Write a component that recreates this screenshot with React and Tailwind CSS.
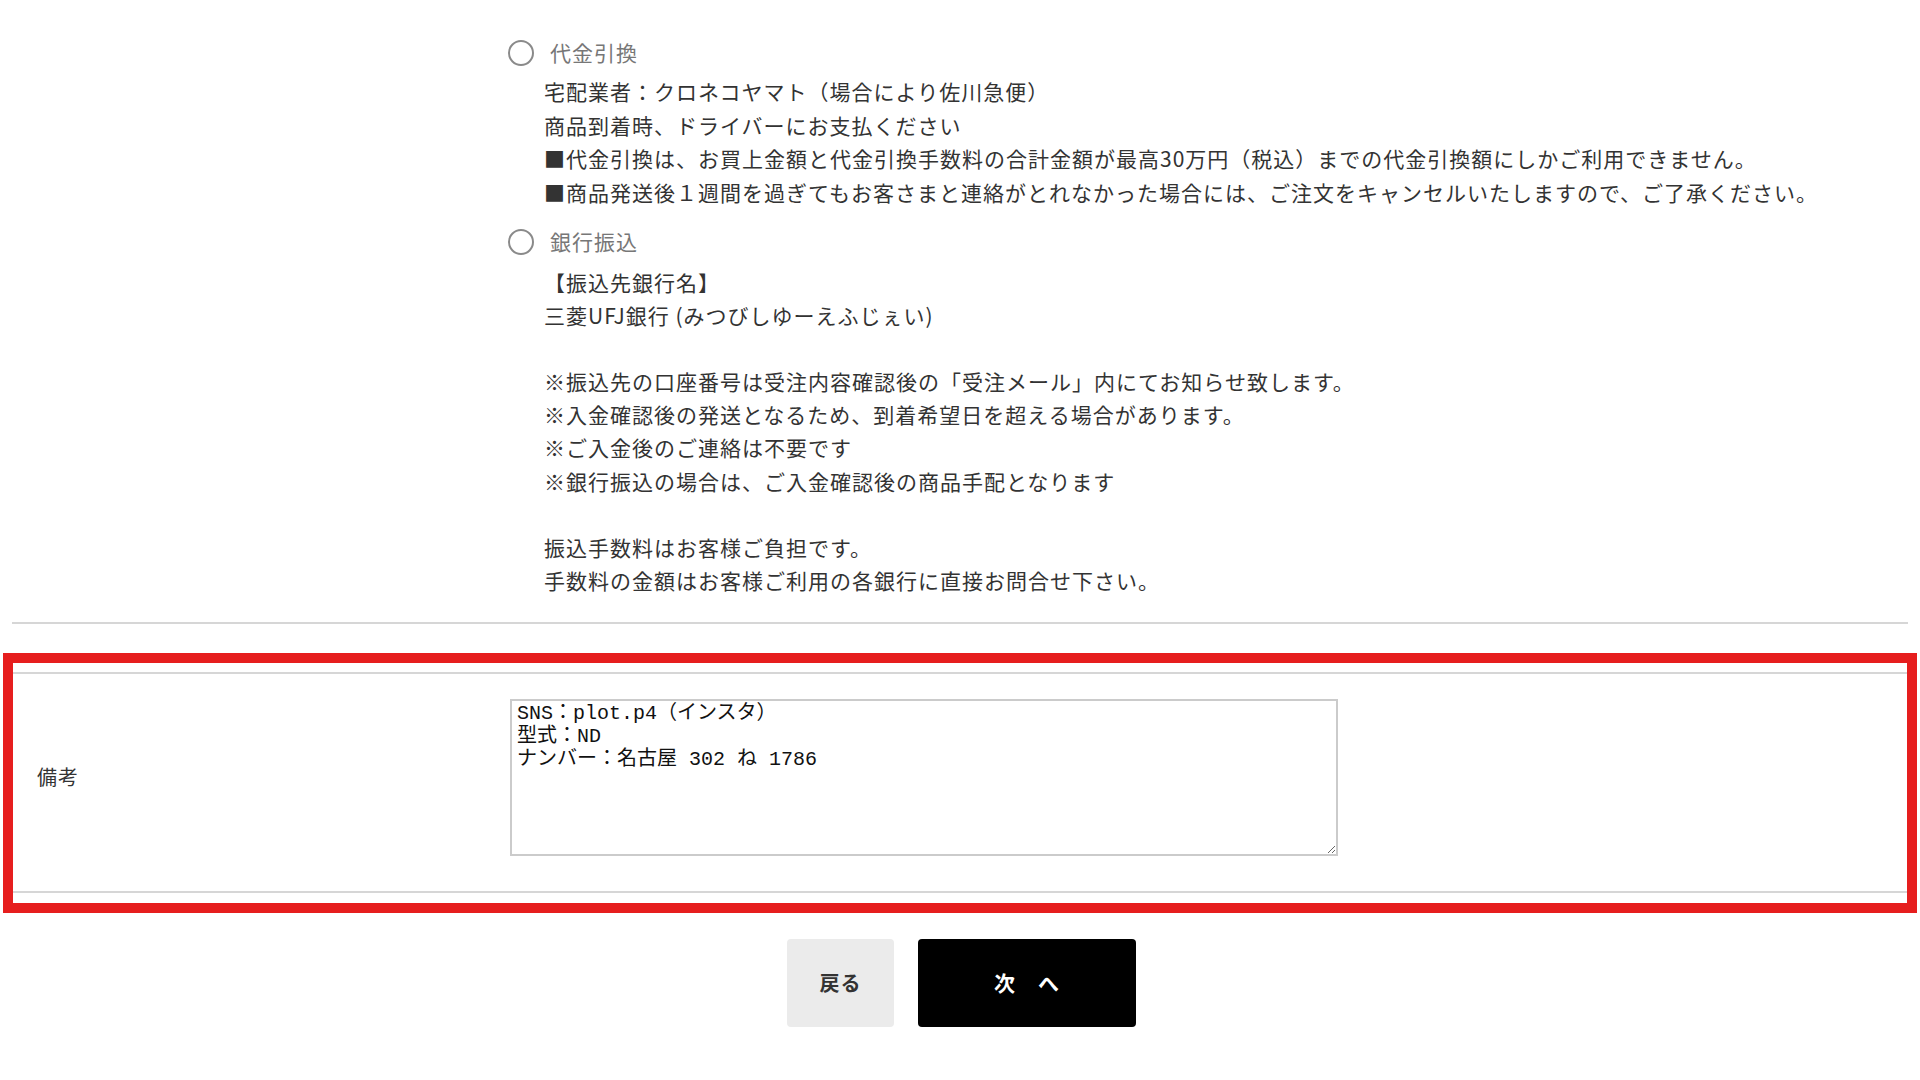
const RadioRow = ({ label }) => (
  <div className="flex items-center h-[33px]">
    <span className="w-[26px] h-[26px] rounded-full border-2 border-[#8a8a8a] bg-white shrink-0" />
    <span className="ml-[16px] text-[#777]">{label}</span>
  </div>
);

const App = () => {
  const [note, setNote] = React.useState("SNS：plot.p4（インスタ）\n型式：ND\nナンバー：名古屋 302 ね 1786");

  return (
    <div className="w-[1920px] h-[1080px] overflow-hidden bg-white text-[#333] font-['Noto_Sans_CJK_JP','Noto_Sans',sans-serif] text-[21px] tracking-[1px]">
      {/* payment methods */}
      <div className="mx-[12px] pl-[496px] pt-[36px] pb-[25px] border-b-2 border-[#d6d6d6]">
        <RadioRow label="代金引換" />
        <div className="ml-[36px] mt-[6px] leading-[33.5px]">
          <p>宅配業者：クロネコヤマト（場合により佐川急便）</p>
          <p>商品到着時、ドライバーにお支払ください</p>
          <p>■代金引換は、お買上金額と代金引換手数料の合計金額が最高30万円（税込）までの代金引換額にしかご利用できません。</p>
          <p>■商品発送後１週間を過ぎてもお客さまと連絡がとれなかった場合には、ご注文をキャンセルいたしますので、ご了承ください。</p>
        </div>
        <div className="mt-[16px]">
          <RadioRow label="銀行振込" />
        </div>
        <div className="ml-[36px] mt-[8px] leading-[33.1px]">
          <p>【振込先銀行名】</p>
          <p>三菱UFJ銀行 (みつびしゆーえふじぇい)</p>
          <p>&nbsp;</p>
          <p>※振込先の口座番号は受注内容確認後の「受注メール」内にてお知らせ致します。</p>
          <p>※入金確認後の発送となるため、到着希望日を超える場合があります。</p>
          <p>※ご入金後のご連絡は不要です</p>
          <p>※銀行振込の場合は、ご入金確認後の商品手配となります</p>
          <p>&nbsp;</p>
          <p>振込手数料はお客様ご負担です。</p>
          <p>手数料の金額はお客様ご利用の各銀行に直接お問合せ下さい。</p>
        </div>
      </div>

      {/* remarks row, highlighted */}
      <div className="mt-[29px] mx-[3px] border-[10px] border-[#e61e1e] pt-[9px] pb-[10px]">
        <div className="flex items-center border-y-2 border-[#d6d6d6] pt-[25px] pb-[35px]">
          <div className="w-[497px] pl-[24px] text-[20px] -mt-[1px]">備考</div>
          <textarea
            value={note}
            onChange={(e) => setNote(e.target.value)}
            className="w-[828px] h-[157px] border-2 border-[#cbcbcb] px-[5px] py-[1px] text-[20px] leading-[23px] tracking-normal text-[#111] font-['Liberation_Mono','Noto_Sans_CJK_JP',monospace] outline-none"
          />
        </div>
      </div>

      {/* buttons */}
      <div className="flex justify-center gap-[24px] mt-[26px] pl-[3px]">
        <button className="w-[107px] h-[88px] rounded-[4px] bg-[#ebebeb] text-[#333] font-bold text-[20px]">戻る</button>
        <button className="w-[218px] h-[88px] rounded-[4px] bg-black text-white font-bold text-[21px]">次　へ</button>
      </div>
    </div>
  );
};

import React from "react";
export default App;
